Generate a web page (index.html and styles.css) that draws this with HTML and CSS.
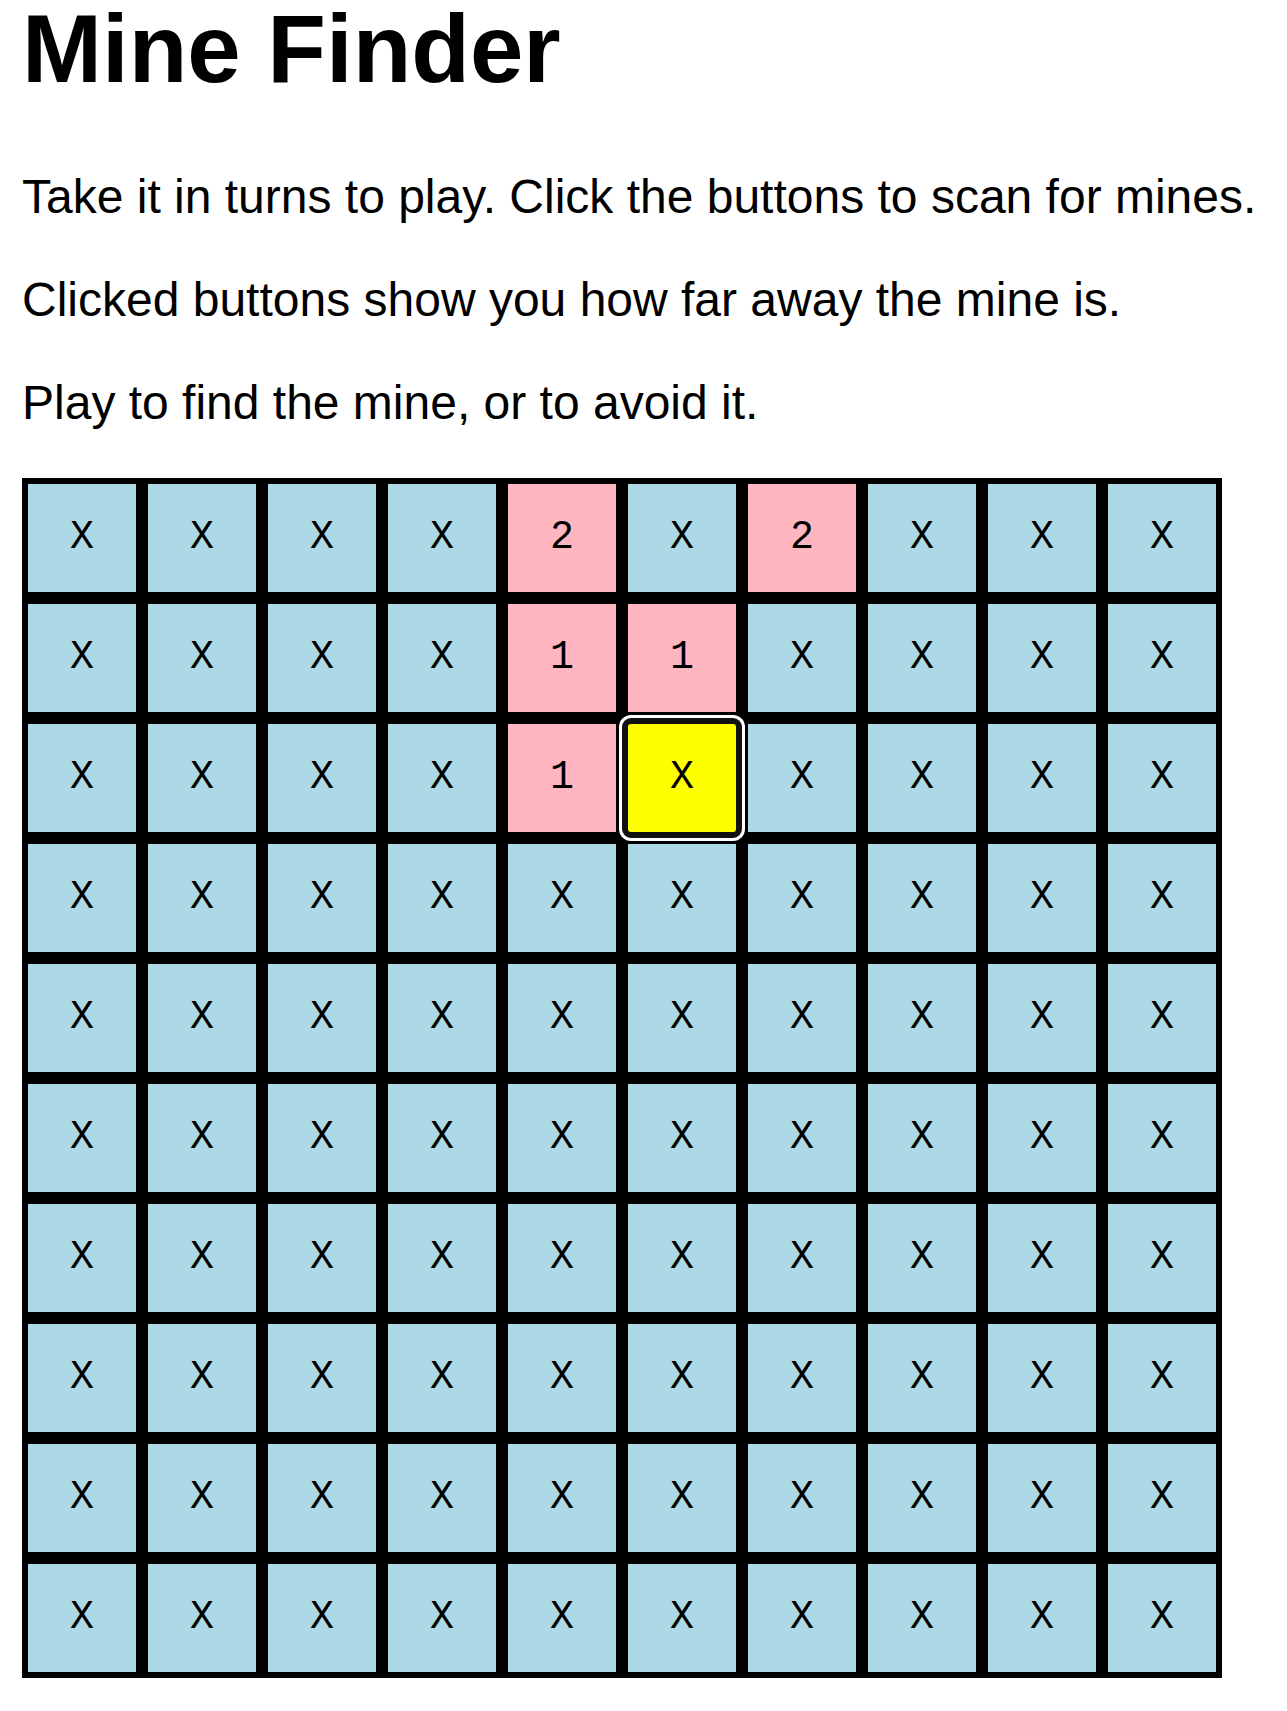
FILE: index.html
```html
<!DOCTYPE html>
<html lang="en">
<head>
<meta charset="utf-8">
<title>Mine Finder</title>
<link rel="stylesheet" href="styles.css">
</head>
<body>
<h1 class="title">Mine Finder</h1>
<p class="intro">Take it in turns to play. Click the buttons to scan for mines.</p>
<p class="intro">Clicked buttons show you how far away the mine is.</p>
<p class="intro">Play to find the mine, or to avoid it.</p>
<div class="board">
<button class="cell">X</button><button class="cell">X</button><button class="cell">X</button><button class="cell">X</button><button class="cell hit">2</button><button class="cell">X</button><button class="cell hit">2</button><button class="cell">X</button><button class="cell">X</button><button class="cell">X</button>
<button class="cell">X</button><button class="cell">X</button><button class="cell">X</button><button class="cell">X</button><button class="cell hit">1</button><button class="cell hit">1</button><button class="cell">X</button><button class="cell">X</button><button class="cell">X</button><button class="cell">X</button>
<button class="cell">X</button><button class="cell">X</button><button class="cell">X</button><button class="cell">X</button><button class="cell hit">1</button><button class="cell current">X</button><button class="cell">X</button><button class="cell">X</button><button class="cell">X</button><button class="cell">X</button>
<button class="cell">X</button><button class="cell">X</button><button class="cell">X</button><button class="cell">X</button><button class="cell">X</button><button class="cell">X</button><button class="cell">X</button><button class="cell">X</button><button class="cell">X</button><button class="cell">X</button>
<button class="cell">X</button><button class="cell">X</button><button class="cell">X</button><button class="cell">X</button><button class="cell">X</button><button class="cell">X</button><button class="cell">X</button><button class="cell">X</button><button class="cell">X</button><button class="cell">X</button>
<button class="cell">X</button><button class="cell">X</button><button class="cell">X</button><button class="cell">X</button><button class="cell">X</button><button class="cell">X</button><button class="cell">X</button><button class="cell">X</button><button class="cell">X</button><button class="cell">X</button>
<button class="cell">X</button><button class="cell">X</button><button class="cell">X</button><button class="cell">X</button><button class="cell">X</button><button class="cell">X</button><button class="cell">X</button><button class="cell">X</button><button class="cell">X</button><button class="cell">X</button>
<button class="cell">X</button><button class="cell">X</button><button class="cell">X</button><button class="cell">X</button><button class="cell">X</button><button class="cell">X</button><button class="cell">X</button><button class="cell">X</button><button class="cell">X</button><button class="cell">X</button>
<button class="cell">X</button><button class="cell">X</button><button class="cell">X</button><button class="cell">X</button><button class="cell">X</button><button class="cell">X</button><button class="cell">X</button><button class="cell">X</button><button class="cell">X</button><button class="cell">X</button>
<button class="cell">X</button><button class="cell">X</button><button class="cell">X</button><button class="cell">X</button><button class="cell">X</button><button class="cell">X</button><button class="cell">X</button><button class="cell">X</button><button class="cell">X</button><button class="cell">X</button>
</div>
</body>
</html>
```
FILE: styles.css
```css
html, body {
  background: #fff;
}
body {
  margin: 0 22px;
  font-family: "Liberation Sans", Arial, sans-serif;
  color: #000;
}
.title {
  margin: 0 0 71px;
  font-size: 96px;
  line-height: 98px;
  font-weight: bold;
}
.intro {
  margin: 0 0 48px;
  font-size: 48px;
}
.board {
  display: grid;
  grid-template-columns: repeat(10, 120px);
  grid-auto-rows: 120px;
  width: 1200px;
}
.cell {
  box-sizing: border-box;
  width: 120px;
  height: 120px;
  margin: 0;
  padding: 0;
  border: 6px solid #000;
  border-radius: 0;
  background: #add8e6;
  color: #000;
  font-family: "Liberation Mono", "Courier New", monospace;
  font-size: 40px;
  line-height: 1;
  cursor: pointer;
}
.cell.hit {
  background: #ffb6c1;
}
.cell.current {
  position: relative;
  z-index: 1;
  background: #ffff00;
  border-color: #111;
  border-radius: 9px;
  box-shadow: 0 0 0 3px #fff, 0 0 0 6px #000;
}
```
